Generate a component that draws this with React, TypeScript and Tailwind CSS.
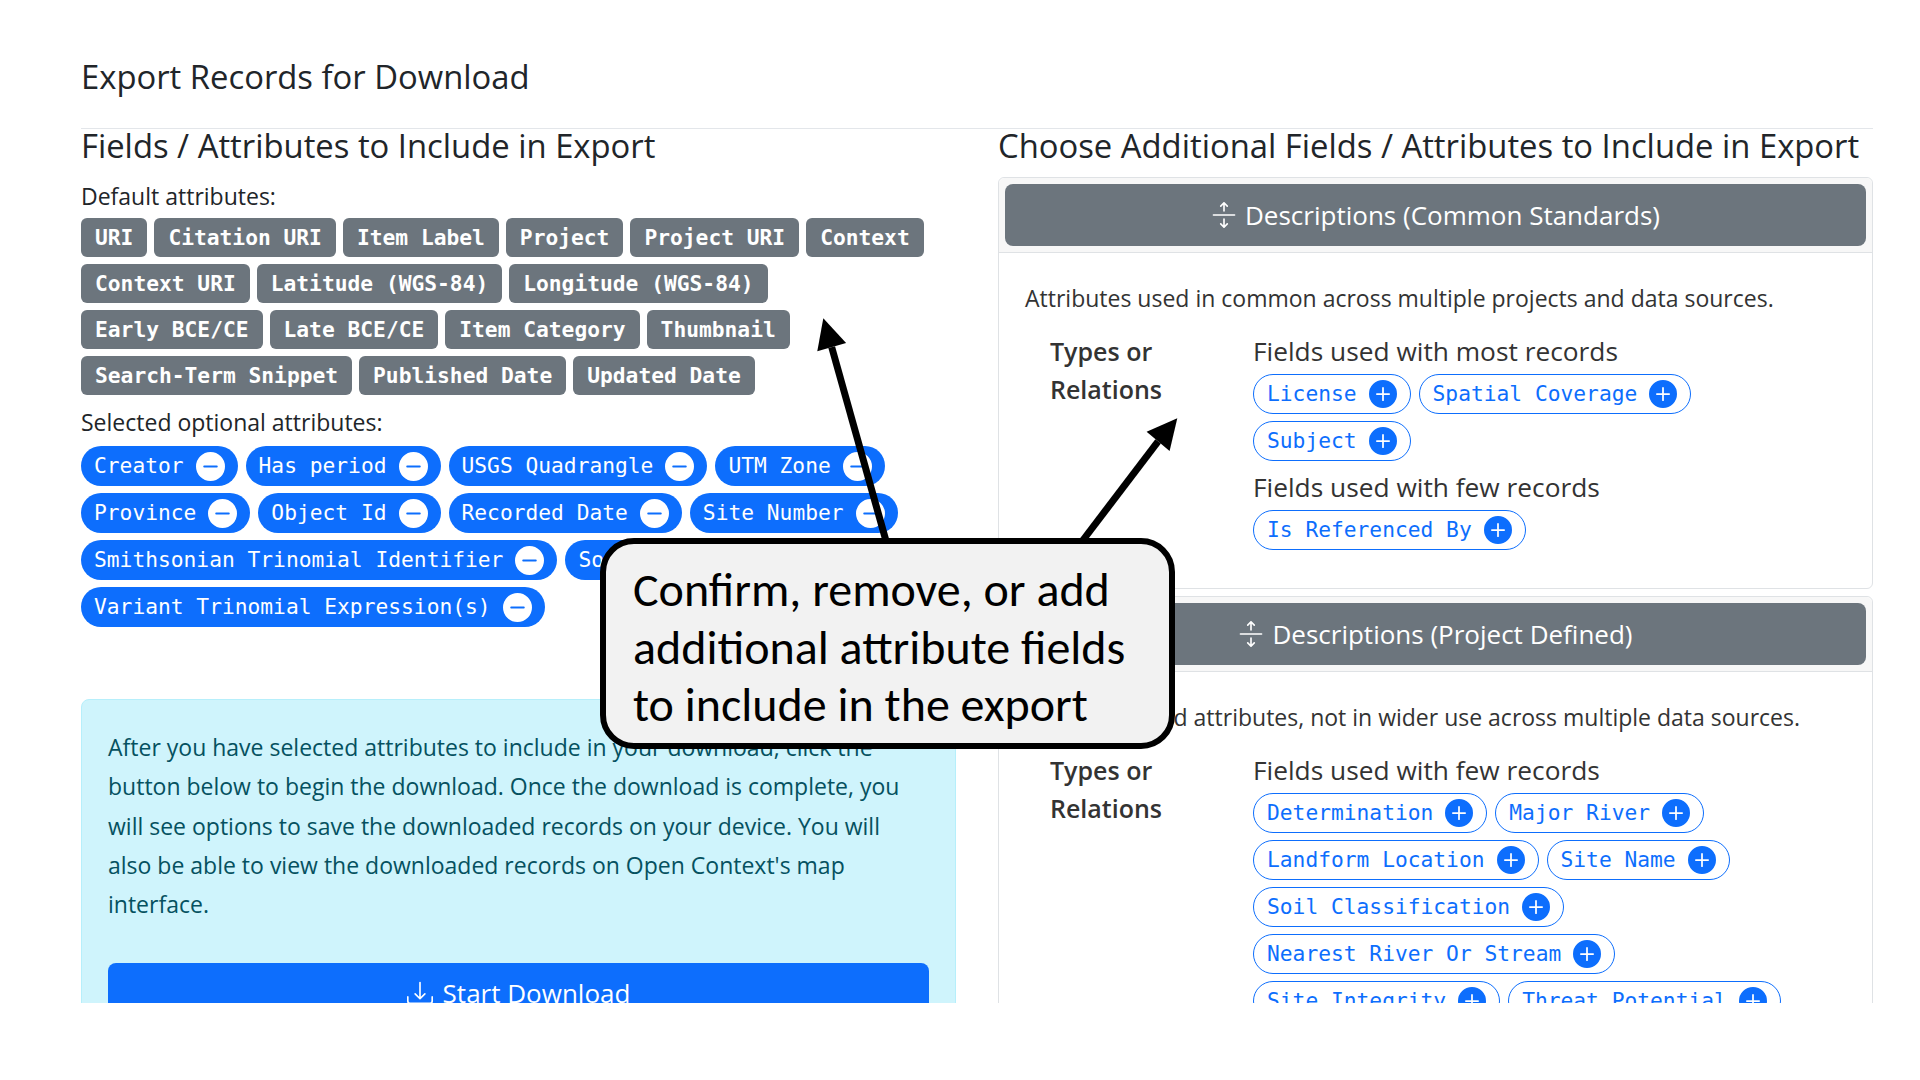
import React from 'react';

const PLUS = [
  'M16 8A8 8 0 1 1 0 8a8 8 0 0 1 16 0M8.5 4.5a.5.5 0 0 0-1 0v3h-3a.5.5 0 0 0 0 1h3v3a.5.5 0 0 0 1 0v-3h3a.5.5 0 0 0 0-1h-3z',
];
const DASH = ['M16 8A8 8 0 1 1 0 8a8 8 0 0 1 16 0M4.5 7.5a.5.5 0 0 0 0 1h7a.5.5 0 0 0 0-1z'];
const EXPAND = [
  'M1 8a.5.5 0 0 1 .5-.5h13a.5.5 0 0 1 0 1h-13A.5.5 0 0 1 1 8M7.646.146a.5.5 0 0 1 .708 0l2 2a.5.5 0 0 1-.708.708L8.5 1.707V5.5a.5.5 0 0 1-1 0V1.707L6.354 2.854a.5.5 0 1 1-.708-.708zM8 10a.5.5 0 0 1 .5.5v3.793l1.146-1.147a.5.5 0 0 1 .708.708l-2 2a.5.5 0 0 1-.708 0l-2-2a.5.5 0 0 1 .708-.708L7.5 14.293V10.5A.5.5 0 0 1 8 10',
];
const DOWNLOAD = [
  'M.5 9.9a.5.5 0 0 1 .5.5v2.5a1 1 0 0 0 1 1h12a1 1 0 0 0 1-1v-2.5a.5.5 0 0 1 1 0v2.5a2 2 0 0 1-2 2H2a2 2 0 0 1-2-2v-2.5a.5.5 0 0 1 .5-.5',
  'M7.646 11.854a.5.5 0 0 0 .708 0l3-3a.5.5 0 0 0-.708-.708L8.5 10.293V1.5a.5.5 0 0 0-1 0v8.793L5.354 8.146a.5.5 0 1 0-.708.708z',
];

function Icon({ d, className }: { d: string[]; className?: string }) {
  return (
    <svg viewBox="0 0 16 16" fill="currentColor" className={className}>
      {d.map(p => (
        <path key={p} d={p} />
      ))}
    </svg>
  );
}

const defaults = [
  'URI', 'Citation URI', 'Item Label', 'Project', 'Project URI', 'Context', 'Context URI',
  'Latitude (WGS-84)', 'Longitude (WGS-84)', 'Early BCE/CE', 'Late BCE/CE', 'Item Category',
  'Thumbnail', 'Search-Term Snippet', 'Published Date', 'Updated Date',
];

const selected = [
  'Creator', 'Has period', 'USGS Quadrangle', 'UTM Zone', 'Province', 'Object Id', 'Recorded Date',
  'Site Number', 'Smithsonian Trinomial Identifier', 'Soil Type', 'Variant Trinomial Expression(s)',
];

const mono = "font-['DejaVu_Sans_Mono',monospace] text-[21.25px] whitespace-pre";

function DefaultBadge({ label }: { label: string }) {
  return (
    <span className={`inline-flex items-center h-[39px] px-[14px] mr-[7px] mb-[7px] rounded-md bg-[#6c757d] text-white font-bold ${mono}`}>
      {label}
    </span>
  );
}

function SelectedPill({ label }: { label: string }) {
  return (
    <span className={`inline-flex items-center h-10 px-[13px] mr-2 mb-[7px] rounded-full bg-[#0d6efd] text-white ${mono}`}>
      {label}
      <Icon d={DASH} className="ml-3 w-[29px] h-[29px] text-white" />
    </span>
  );
}

function AddPill({ label }: { label: string }) {
  return (
    <span className={`inline-flex items-center h-10 px-[13px] mr-2 mb-[7px] rounded-full border-[1.5px] border-[#0d6efd] text-[#0d6efd] bg-white ${mono}`}>
      {label}
      <Icon d={PLUS} className="ml-3 w-[28px] h-[28px]" />
    </span>
  );
}

interface Group {
  title: string;
  fields: string[];
}

function FieldCard({ heading, blurb, groups, className }: { heading: string; blurb: string; groups: Group[]; className?: string }) {
  return (
    <div className={`border border-[#dfe2e5] rounded-md ${className ?? ''}`}>
      <div className="bg-[#f7f7f7] p-[6px] border-b border-[#dfe2e5] rounded-t-md">
        <button className="w-full h-[62px] rounded-lg bg-[#6c757d] text-white text-[26px] flex items-center justify-center">
          <Icon d={EXPAND} className="w-[26px] h-[26px] mr-[8px]" />
          {heading}
        </button>
      </div>
      <div className="px-[26px] pt-[29px] pb-[31px]">
        <p className="text-[23px] leading-[33px] text-[#333]">{blurb}</p>
        <div className="flex ml-[25px] mt-[17px]">
          <div className="w-[203px] shrink-0 text-[25px] leading-[38px] font-semibold text-[#333]">
            Types or
            <br />
            Relations
          </div>
          <div className="flex-1">
            {groups.map(g => (
              <div key={g.title}>
                <div className="text-[26.3px] leading-[38px] text-[#333]">{g.title}</div>
                <div className="flex flex-wrap mt-[4px]">
                  {g.fields.map(f => (
                    <AddPill key={f} label={f} />
                  ))}
                </div>
              </div>
            ))}
          </div>
        </div>
      </div>
    </div>
  );
}

export default function App() {
  return (
    <div className="relative w-[1920px] h-[1080px] bg-white text-[#212529] font-['Open_Sans',sans-serif]">
      <div className="h-[1003px] overflow-hidden pl-[81px] pr-[47px]">
        <h1 className="pt-[58px] text-[32.8px] leading-[38px] font-normal">Export Records for Download</h1>
        <hr className="mt-[32px] border-t border-[#e3e6ea]" />
        <div className="grid grid-cols-[875px_875px] gap-x-[42px]">
          <div>
            <h2 className="text-[32.8px] leading-[34px]">Fields / Attributes to Include in Export</h2>
            <div className="mt-[17px] text-[23px] leading-[33px]">Default attributes:</div>
            <div className="flex flex-wrap mt-[5px] w-[860px]">
              {defaults.map(d => (
                <DefaultBadge key={d} label={d} />
              ))}
            </div>
            <div className="mt-[4px] text-[23px] leading-[33px]">Selected optional attributes:</div>
            <div className="flex flex-wrap mt-[7px]">
              {selected.map(s => (
                <SelectedPill key={s} label={s} />
              ))}
            </div>
            <div className="mt-[65px] rounded-lg border border-[#b6effb] bg-[#cff4fc] px-[26px] pt-[28px] pb-[30px] text-[#055160]">
              <p className="text-[23px] leading-[39.3px]">
                After you have selected attributes to include in your download, click the button below to begin the
                download. Once the download is complete, you will see options to save the downloaded records on your
                device. You will also be able to view the downloaded records on Open Context's map interface.
              </p>
              <button className="mt-[39px] w-full h-[60px] rounded-lg bg-[#0d6efd] text-white text-[26px] flex items-center justify-center">
                <Icon d={DOWNLOAD} className="w-[26px] h-[26px] mr-[10px]" />
                Start Download
              </button>
            </div>
          </div>
          <div>
            <h2 className="text-[32.8px] leading-[34px]">Choose Additional Fields / Attributes to Include in Export</h2>
            <FieldCard
              className="mt-[14px]"
              heading="Descriptions (Common Standards)"
              blurb="Attributes used in common across multiple projects and data sources."
              groups={[
                { title: 'Fields used with most records', fields: ['License', 'Spatial Coverage', 'Subject'] },
                { title: 'Fields used with few records', fields: ['Is Referenced By'] },
              ]}
            />
            <FieldCard
              className="mt-[7px]"
              heading="Descriptions (Project Defined)"
              blurb="Project defined attributes, not in wider use across multiple data sources."
              groups={[
                {
                  title: 'Fields used with few records',
                  fields: [
                    'Determination', 'Major River', 'Landform Location', 'Site Name', 'Soil Classification',
                    'Nearest River Or Stream', 'Site Integrity', 'Threat Potential', 'Site Type', 'Elevation',
                  ],
                },
              ]}
            />
          </div>
        </div>
      </div>

      {/* annotation arrows */}
      <svg className="absolute inset-0 w-[1920px] h-[1080px] pointer-events-none" viewBox="0 0 1920 1080">
        <line x1="888" y1="548" x2="831.7" y2="347.1" stroke="black" strokeWidth="7" />
        <polygon points="823.3,318.3 817.3,351.3 846.1,342.9" fill="black" />
        <line x1="1077" y1="548" x2="1158.1" y2="441.4" stroke="black" strokeWidth="7" />
        <polygon points="1177.3,418.3 1169.6,451 1146.6,431.8" fill="black" />
      </svg>

      {/* annotation callout */}
      <div className="absolute left-[600px] top-[538px] w-[575px] h-[211px] rounded-[34px] border-[6px] border-black bg-[#f2f2f2] px-[27px] pt-[17px] text-black font-['Carlito','Lato',sans-serif] text-[48px] leading-[57.5px]">
        Confirm, remove, or add
        <br />
        additional attribute fields
        <br />
        to include in the export
      </div>
    </div>
  );
}
